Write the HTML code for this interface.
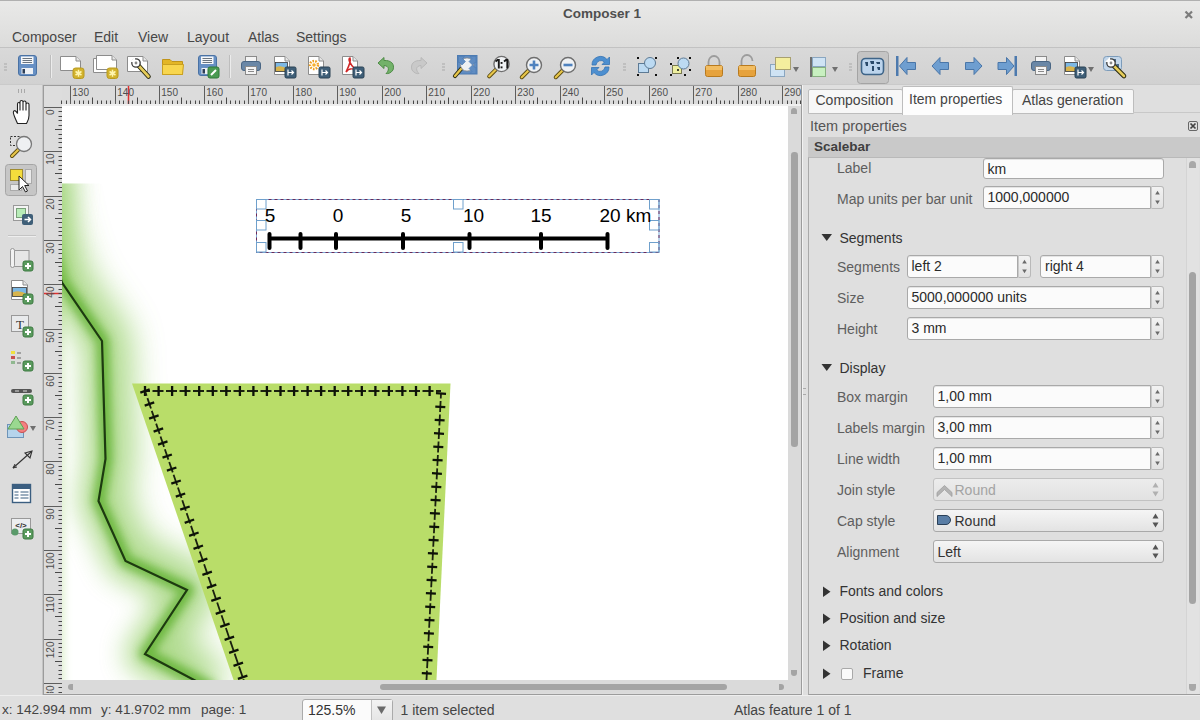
<!DOCTYPE html>
<html><head><meta charset="utf-8">
<style>
*{margin:0;padding:0;box-sizing:border-box}
html,body{width:1200px;height:720px;overflow:hidden;background:#dfdfdf;font-family:"Liberation Sans",sans-serif;color:#3c3c3c}
.a{position:absolute}
.t{position:absolute;white-space:nowrap;font-size:14px;line-height:16px}
.lb{color:#5e5e5e}
.inp{position:absolute;background:#fbfbfb;border:1px solid #a9a9a9;border-radius:3px;height:23px;font-size:14px;line-height:21px;padding-left:4px;color:#2a2a2a;box-shadow:inset 0 1px 0 #e4e4e4}
.spin{position:absolute;width:13px;height:23px;border:1px solid #b9b9b9;border-left:1px solid #c9c9c9;border-radius:0 3px 3px 0;background:linear-gradient(#f2f2f2,#e2e2e2)}
.cmb{position:absolute;background:linear-gradient(#f5f5f5,#e3e3e3);border:1px solid #a9a9a9;border-radius:3px;height:23px;font-size:14px;line-height:22px;padding-left:4px;color:#333}
</style></head><body>

<div class="a" style="left:0;top:0;width:1200px;height:47px;background:linear-gradient(#e9e9e8,#dcdcdb);border-top:1px solid #b0b0b0"></div>
<div class="t" style="left:563px;top:6px;font-weight:bold;font-size:13.5px;color:#4f4f4f">Composer 1</div>
<svg class="a" style="left:1180px;top:6px" width="18" height="18"><path d="M5.5,5.5 L12,12 M12,5.5 L5.5,12" stroke="#7c7c7c" stroke-width="2.2"/></svg>
<div class="t" style="left:12px;top:29px;color:#474747">Composer</div>
<div class="t" style="left:94px;top:29px;color:#474747">Edit</div>
<div class="t" style="left:138px;top:29px;color:#474747">View</div>
<div class="t" style="left:187px;top:29px;color:#474747">Layout</div>
<div class="t" style="left:248px;top:29px;color:#474747">Atlas</div>
<div class="t" style="left:296px;top:29px;color:#474747">Settings</div>
<div class="a" style="left:0;top:47px;width:1200px;height:38px;background:linear-gradient(#d9d9d9,#d1d1d1);border-top:1px solid #c2c2c2;border-bottom:1px solid #cacaca"></div>
<div class="a" style="left:0;top:85px;width:43px;height:610px;background:#dcdcdc;border-right:1px solid #c4c4c4"></div>
<div class="a" style="left:43px;top:85px;width:759px;height:610px;background:#dcdcdc;border:1px solid #9c9c9c"></div>
<div class="a" style="left:44px;top:86px;width:18px;height:20px;background:#dddddd"></div>
<div class="a" style="left:62px;top:104px;width:739px;height:2px;background:#efefef"></div>
<div class="a" style="left:788px;top:106px;width:13px;height:574px;background:#dadada"></div>
<div class="a" style="left:62px;top:680px;width:739px;height:13px;background:#dadada"></div>
<div class="a" style="left:380px;top:684px;width:347px;height:6px;border-radius:3px;background:#a4a4a4"></div>
<div class="a" style="left:67.5px;top:684px;width:5px;height:6px;border-radius:3px 0 0 3px;background:#a4a4a4"></div>
<div class="a" style="left:779px;top:684px;width:5px;height:6px;border-radius:0 3px 3px 0;background:#a4a4a4"></div>
<div class="a" style="left:791px;top:108px;width:6px;height:6px;border-radius:3px 3px 0 0;background:#a4a4a4"></div>
<div class="a" style="left:791px;top:152px;width:6.5px;height:295px;border-radius:3.2px;background:#a4a4a4"></div>
<div class="a" style="left:791px;top:670px;width:6px;height:6px;border-radius:0 0 3px 3px;background:#a4a4a4"></div>
<div class="a" style="left:788px;top:680px;width:13px;height:13px;background:#dadada"></div>
<svg class="a" style="left:0;top:0" width="1200" height="720" font-family="Liberation Sans">
<path d="M4,64H7M4,67H7M4,70H7" stroke="#a9a9a9" stroke-width="1"/>
<g transform="translate(17,55)">
<rect x="1.5" y="0.5" width="18" height="20" rx="2.5" fill="#6790c4" stroke="#4a72a4"/>
<rect x="4" y="1.5" width="12.5" height="7.5" fill="#f6f7f9"/>
<path d="M5.5,3.5H15M5.5,5.5H15M5.5,7.5H15" stroke="#5a6470" stroke-width="0.9"/>
<rect x="4.5" y="13" width="11.5" height="6" fill="#eef1f5"/>
<rect x="5.5" y="14" width="2.5" height="4.5" fill="#2c3e58"/>
</g>
<line x1="50.5" y1="55" x2="50.5" y2="78" stroke="#bdbdbd"/><line x1="51.5" y1="55" x2="51.5" y2="78" stroke="#ececec"/>
<path d="M60.5,56.5H76L80.5,61V70.5H60.5Z" fill="#fff" stroke="#8c8c8c"/>
<path d="M76,56.5V61H80.5" fill="#e6e6e6" stroke="#8c8c8c"/>
<rect x="73" y="68" width="11" height="10.5" rx="2.5" fill="#d2b22c" stroke="#b89a20"/>
<path d="M78.5,69.8V76.7M75.5,71.5L81.5,75M75.5,75L81.5,71.5" stroke="#fff6b0" stroke-width="1.5"/>
<path d="M93.5,58.5H109L113.5,63V72.5H93.5Z" fill="#fff" stroke="#8c8c8c"/>
<path d="M109,58.5V63H113.5" fill="#e6e6e6" stroke="#8c8c8c"/>
<path d="M96.5,55.5H112L116.5,60V69.5H96.5Z" fill="#fff" stroke="#8c8c8c"/>
<path d="M112,55.5V60H116.5" fill="#e6e6e6" stroke="#8c8c8c"/>
<rect x="107" y="68" width="11" height="10.5" rx="2.5" fill="#d2b22c" stroke="#b89a20"/>
<path d="M112.5,69.8V76.7M109.5,71.5L115.5,75M109.5,75L115.5,71.5" stroke="#fff6b0" stroke-width="1.5"/>
<path d="M127.5,56.5H143L147.5,61V71.5H127.5Z" fill="#fff" stroke="#8c8c8c"/>
<path d="M143,56.5V61H147.5" fill="#e6e6e6" stroke="#8c8c8c"/>
<path d="M137.5,64.5 L148.5,76.5" stroke="#2a2a10" stroke-width="4.6" stroke-linecap="round"/><path d="M138,65 L148.5,76.5" stroke="#e6cc5a" stroke-width="2.6" stroke-linecap="round"/><circle cx="136" cy="63" r="4.2" fill="#fff" stroke="#3a3a3a" stroke-width="1.3"/><path d="M134.8,57 L135.6,62.6 L130,61.8Z" fill="#fff" stroke="none"/><circle cx="136" cy="63" r="1.4" fill="#888"/>
<path d="M162.5,59.5H170L172,61.5H182.5V74.5H162.5Z" fill="#e3b626" stroke="#c0941a"/><path d="M162.5,64.5H183.5L182.5,74.5H162.5Z" fill="#f8d64e" stroke="#c9a020"/>
<g transform="translate(197,55)">
<rect x="1.5" y="0.5" width="18" height="20" rx="2.5" fill="#6790c4" stroke="#4a72a4"/>
<rect x="4" y="1.5" width="12.5" height="7.5" fill="#f6f7f9"/>
<path d="M5.5,3.5H15M5.5,5.5H15M5.5,7.5H15" stroke="#5a6470" stroke-width="0.9"/>
<rect x="4.5" y="13" width="11.5" height="6" fill="#eef1f5"/>
<rect x="5.5" y="14" width="2.5" height="4.5" fill="#2c3e58"/>
</g>
<rect x="208" y="67" width="11" height="11" rx="2" fill="#4a9a52" stroke="#2f7a38"/><path d="M211,75L216,70" stroke="#fff" stroke-width="2"/>
<line x1="229.5" y1="55" x2="229.5" y2="78" stroke="#bdbdbd"/><line x1="230.5" y1="55" x2="230.5" y2="78" stroke="#ececec"/>
<g transform="translate(241,56)">
<rect x="4.5" y="0.5" width="11" height="6" fill="#f4f4f4" stroke="#8a8a8a"/>
<rect x="0.5" y="5.5" width="19" height="9" rx="2.5" fill="#6a87a6" stroke="#4a6684"/>
<rect x="4.5" y="10.5" width="11" height="8" fill="#f4f4f4" stroke="#8a8a8a"/>
<path d="M7,13.5H13M7,15.5H13" stroke="#8a8a8a"/>
</g>
<path d="M274.5,56.5H285L289.5,61V74.5H274.5Z" fill="#fff" stroke="#8c8c8c"/>
<path d="M285,56.5V61H289.5" fill="#e6e6e6" stroke="#8c8c8c"/>
<rect x="275.5" y="62.5" width="12" height="9" fill="#7cb8e4"/><path d="M275.5,67.45 Q280.9,64.3 287.5,68.8 V71.5 H275.5Z" fill="#d8b44c"/><rect x="275.5" y="62.5" width="12" height="9" fill="none" stroke="#3a3a3a" stroke-width="0.8"/>
<rect x="285" y="67" width="11" height="11" rx="1.5" fill="#3f5f78" stroke="#2a4254"/>
<path d="M288,69.5V75.5M288,72.5H293.5M291.5,70.5L293.5,72.5L291.5,74.5" stroke="#fff" stroke-width="1.2" fill="none"/>
<path d="M308.5,56.5H319L323.5,61V74.5H308.5Z" fill="#fff" stroke="#8c8c8c"/>
<path d="M319,56.5V61H323.5" fill="#e6e6e6" stroke="#8c8c8c"/>
<circle cx="314" cy="65" r="4" fill="none" stroke="#f0a020" stroke-width="2.4" stroke-dasharray="1.6 1.2"/><circle cx="314" cy="65" r="1.8" fill="#f6b030"/>
<rect x="319" y="67" width="11" height="11" rx="1.5" fill="#3f5f78" stroke="#2a4254"/>
<path d="M322,69.5V75.5M322,72.5H327.5M325.5,70.5L327.5,72.5L325.5,74.5" stroke="#fff" stroke-width="1.2" fill="none"/>
<path d="M342.5,56.5H353L357.5,61V74.5H342.5Z" fill="#fff" stroke="#8c8c8c"/>
<path d="M353,56.5V61H357.5" fill="#e6e6e6" stroke="#8c8c8c"/>
<path d="M346,72 C349,66 351,60 350,58 C348,58 349,64 356,70 C352,68 348,69 346,72Z" fill="none" stroke="#d02828" stroke-width="1.6"/>
<rect x="353" y="67" width="11" height="11" rx="1.5" fill="#3f5f78" stroke="#2a4254"/>
<path d="M356,69.5V75.5M356,72.5H361.5M359.5,70.5L361.5,72.5L359.5,74.5" stroke="#fff" stroke-width="1.2" fill="none"/>
<path d="M378,63 L384,57.5 V60.5 C391,60 395,64 393,70 C391,73 388,74 386,73.5 C389,71 390,66 384,65.5 V68.5Z" fill="#73b26a" stroke="#4f8c47" stroke-width="1"/>
<path d="M427,63 L421,57.5 V60.5 C414,60 410,64 412,70 C414,73 417,74 419,73.5 C416,71 415,66 421,65.5 V68.5Z" fill="#c9c9c9" stroke="#b8b8b8" stroke-width="1"/>
<path d="M442,64H445M442,67H445M442,70H445" stroke="#a9a9a9" stroke-width="1"/>
<rect x="457.5" y="55.5" width="19.5" height="18.5" fill="#5f8cc2" stroke="#4c7bb2"/>
<path d="M461,69 L455,76" stroke="#2a2a10" stroke-width="4.2" stroke-linecap="round"/><path d="M461,69 L455,76" stroke="#e8c64a" stroke-width="2.3" stroke-linecap="round"/>
<circle cx="467" cy="64.5" r="6.6" fill="#eef0f2" stroke="#8a8a8a" stroke-width="0.8"/>
<path d="M458.5,56.5 H464.5 L462.5,58.5 L465.5,61.5 L462,65 L459,62 L458.5,62.5Z M476,56.5 H470 L472,58.5 L469,61.5 L472.5,65 L475.5,62 L476,62.5Z M476,73.5 H470 L472,71.5 L469,68.5 L472.5,65 L475.5,68 L476,67.5Z" fill="#5f8cc2" stroke="#4c7bb2" stroke-width="0.6"/>
<path d="M496.18,69.32L489.18,76.32" stroke="#5a4a10" stroke-width="4" stroke-linecap="round"/>
<path d="M496.18,69.32L489.18,76.32" stroke="#e8c64a" stroke-width="2.2" stroke-linecap="round"/>
<circle cx="501.5" cy="64" r="7.6" fill="#f0f2f4" stroke="#6e6e6e" stroke-width="1.4"/>
<path d="M495.5,61.5 L497.5,60 H498.8 V68.5 M504,61.5 L506,60 H507.3 V68.5" fill="none" stroke="#1a1a1a" stroke-width="1.9"/><rect x="500.6" y="62" width="1.9" height="1.9" fill="#1a1a1a"/><rect x="500.6" y="66.4" width="1.9" height="1.9" fill="#1a1a1a"/>
<path d="M528.75,70.25L521.75,77.25" stroke="#5a4a10" stroke-width="4" stroke-linecap="round"/>
<path d="M528.75,70.25L521.75,77.25" stroke="#e8c64a" stroke-width="2.2" stroke-linecap="round"/>
<circle cx="534" cy="65" r="7.5" fill="#f0f2f4" stroke="#6e6e6e" stroke-width="1.4"/>
<path d="M534,60.5V69.5M529.5,65H538.5" stroke="#4f82bf" stroke-width="2.6"/>
<path d="M562.75,70.25L555.75,77.25" stroke="#5a4a10" stroke-width="4" stroke-linecap="round"/>
<path d="M562.75,70.25L555.75,77.25" stroke="#e8c64a" stroke-width="2.2" stroke-linecap="round"/>
<circle cx="568" cy="65" r="7.5" fill="#f0f2f4" stroke="#6e6e6e" stroke-width="1.4"/>
<path d="M563.5,65H572.5" stroke="#4f82bf" stroke-width="2.6"/>
<path d="M592,65 A8.5,8.5 0 0 1 607,59.5 L609.5,57 V64.5 H602 L604.5,62 A5,5 0 0 0 596,65Z" fill="#4d8fd0" stroke="#3674b2" stroke-width="0.8"/><path d="M609,67 A8.5,8.5 0 0 1 594,72.5 L591.5,75 V67.5 H599 L596.5,70 A5,5 0 0 0 605,67Z" fill="#4d8fd0" stroke="#3674b2" stroke-width="0.8"/>
<path d="M623,64H626M623,67H626M623,70H626" stroke="#a9a9a9" stroke-width="1"/>
<rect x="638.5" y="63.5" width="10" height="9" fill="#bcdaf2" stroke="#5d7a94"/><circle cx="650" cy="63" r="5.5" fill="#bcdaf2" stroke="#5d7a94"/>
<path d="M637,57h2v2h-2zM655,57h2v2h-2zM637,74h2v2h-2zM655,74h2v2h-2z" fill="#111"/>
<rect x="672.5" y="65.5" width="9" height="8" fill="#eef0a0" stroke="#7a7a50"/><circle cx="683.5" cy="63.5" r="5.5" fill="#bcdaf2" stroke="#5d7a94"/><circle cx="678" cy="70" r="1" fill="#111"/>
<path d="M670,63h2v2h-2zM689,57h2v2h-2zM670,74h2v2h-2zM689,69h2v2h-2zM684,74h2v2h-2zM677,57h2v2h-2z" fill="#111"/>
<path d="M708.5,66V62 A5.5,6 0 0 1 719.5,62 V66" fill="none" stroke="#9c9c9c" stroke-width="1.8"/><rect x="705.5" y="65.5" width="17" height="11" rx="2" fill="#e6a23c" stroke="#b87a1e"/><rect x="706" y="66" width="16" height="4" fill="#f2bd62"/>
<path d="M741.5,66V61 A5.5,6 0 0 1 752.5,61" fill="none" stroke="#9c9c9c" stroke-width="1.8"/><rect x="738.5" y="65.5" width="17" height="11" rx="2" fill="#e6a23c" stroke="#b87a1e"/><rect x="739" y="66" width="16" height="4" fill="#f2bd62"/>
<rect x="770.5" y="64.5" width="14" height="12" fill="#cfe3f4" stroke="#8aa6c0"/><rect x="775.5" y="57.5" width="15" height="12" fill="#f4ee9e" stroke="#a8a070"/>
<path d="M793,67H799L796,72Z" fill="#707070"/>
<rect x="810" y="57" width="2" height="20" fill="#6e6e6e"/><rect x="812.5" y="57.5" width="13" height="9" fill="#cfe3f4" stroke="#8aa6c0"/><rect x="812.5" y="67.5" width="13" height="9" fill="#c8f0c0" stroke="#88b080"/>
<path d="M832,67H838L835,72Z" fill="#707070"/>
<path d="M849,64H852M849,67H852M849,70H852" stroke="#a9a9a9" stroke-width="1"/>
<rect x="857.5" y="51.5" width="31" height="32" rx="3" fill="#c4c4c4" stroke="#a4a4a4"/>
<rect x="861.5" y="58.5" width="22" height="16" rx="4" fill="#bcd4ec" stroke="#3e6488" stroke-width="1.6"/><path d="M865,62h3v4h-2zM870,61h4v3h-3zM872,66h2v5h-2zM876,62h4v2h-3zM877,67h3v3h-2z" fill="#2a4a6a"/>
<rect x="896" y="56" width="2.5" height="20" fill="#4d7aae"/><path d="M899.5,66 L907,57.5 V62.5 H915.5 V69.5 H907 V74.5Z" fill="#6e9ed0" stroke="#4a76a8"/>
<path d="M932,66 L940,57.5 V62.5 H948.5 V69.5 H940 V74.5Z" fill="#6e9ed0" stroke="#4a76a8"/>
<path d="M982,66 L974,57.5 V62.5 H965.5 V69.5 H974 V74.5Z" fill="#6e9ed0" stroke="#4a76a8"/>
<rect x="1014.5" y="56" width="2.5" height="20" fill="#4d7aae"/><path d="M1014,66 L1006.5,57.5 V62.5 H998 V69.5 H1006.5 V74.5Z" fill="#6e9ed0" stroke="#4a76a8"/>
<g transform="translate(1031,56)">
<rect x="4.5" y="0.5" width="11" height="6" fill="#f4f4f4" stroke="#8a8a8a"/>
<rect x="0.5" y="5.5" width="19" height="9" rx="2.5" fill="#6a87a6" stroke="#4a6684"/>
<rect x="4.5" y="10.5" width="11" height="8" fill="#f4f4f4" stroke="#8a8a8a"/>
<path d="M7,13.5H13M7,15.5H13" stroke="#8a8a8a"/>
</g>
<path d="M1064.5,56.5H1075L1079.5,61V74.5H1064.5Z" fill="#fff" stroke="#8c8c8c"/>
<path d="M1075,56.5V61H1079.5" fill="#e6e6e6" stroke="#8c8c8c"/>
<rect x="1065.5" y="62.5" width="12" height="9" fill="#7cb8e4"/><path d="M1065.5,67.45 Q1070.9,64.3 1077.5,68.8 V71.5 H1065.5Z" fill="#d8b44c"/><rect x="1065.5" y="62.5" width="12" height="9" fill="none" stroke="#3a3a3a" stroke-width="0.8"/>
<rect x="1075" y="67" width="11" height="11" rx="1.5" fill="#3f5f78" stroke="#2a4254"/>
<path d="M1078,69.5V75.5M1078,72.5H1083.5M1081.5,70.5L1083.5,72.5L1081.5,74.5" stroke="#fff" stroke-width="1.2" fill="none"/>
<path d="M1088,67H1094L1091,72Z" fill="#707070"/>
<rect x="1103.5" y="56.5" width="18" height="14" rx="3" fill="#c2d6ea" stroke="#7d9cba"/><path d="M1107,60h3v3h-2zM1113,59h3v3h-3zM1116,64h3v3h-2z" fill="#4a6a8a"/>
<path d="M1112.5,64.5 L1124,76" stroke="#2a2a10" stroke-width="4.6" stroke-linecap="round"/><path d="M1113,65 L1124,76" stroke="#e6cc5a" stroke-width="2.6" stroke-linecap="round"/><circle cx="1111" cy="63" r="4.2" fill="#fff" stroke="#3a3a3a" stroke-width="1.3"/><path d="M1109.8,57 L1110.6,62.6 L1105,61.8Z" fill="#fff" stroke="none"/><circle cx="1111" cy="63" r="1.4" fill="#888"/>
<path d="M18.5,89V93M21.5,89V93M24.5,89V93" stroke="#a9a9a9"/>
<g transform="translate(0.5,1.5)"><path d="M17,122 C15,117 12,112 13,110 C14,108 16,110 17,112 V102.5 C17,100.5 19.5,100.5 19.5,102.5 V109 V100.5 C19.5,98.5 22.5,98.5 22.5,100.5 V109 V101 C22.5,99 25.5,99 25.5,101 V109 V103 C25.5,101 28.5,101 28.5,103 V114 C28.5,118 27,120 26,122Z" fill="#fff" stroke="#222" stroke-width="1.1"/></g>
<rect x="10.5" y="136.5" width="10" height="9" fill="none" stroke="#333" stroke-dasharray="2 1.5"/>
<path d="M18,150 L12,156" stroke="#5a4a10" stroke-width="4" stroke-linecap="round"/><path d="M18,150 L12,156" stroke="#e8c64a" stroke-width="2.2" stroke-linecap="round"/><circle cx="24" cy="144" r="7.5" fill="#eef0f2" stroke="#777" stroke-width="1.3"/>
<rect x="5.5" y="164.5" width="31" height="31" rx="3" fill="#c6c6c6" stroke="#a6a6a6"/>
<rect x="10.5" y="169.5" width="12" height="11" fill="#f4dc3c" stroke="#a08c30"/><rect x="25.5" y="169.5" width="6" height="14" fill="#eaeaea" stroke="#aaa"/><rect x="10.5" y="184.5" width="11" height="6" fill="#eaeaea" stroke="#aaa"/>
<path d="M19,176 L19,190 L22.5,186.5 L25.5,192 L27.5,191 L24.7,185.5 L29,185.5Z" fill="#fff" stroke="#222" stroke-width="1"/>
<rect x="13.5" y="205.5" width="15" height="15" fill="#f4f4f4" stroke="#999"/><rect x="16.5" y="208.5" width="9" height="9" fill="#b8ecb8" stroke="#7aa07a"/>
<rect x="22" y="214" width="11" height="11" rx="2" fill="#3f5f78"/><path d="M24.5,219.5H30M28,217L30.5,219.5L28,222" stroke="#fff" stroke-width="1.5" fill="none"/>
<line x1="8" y1="235.5" x2="36" y2="235.5" stroke="#c4c4c4"/><line x1="8" y1="236.5" x2="36" y2="236.5" stroke="#eeeeee"/>
<rect x="13.5" y="250.5" width="15.5" height="16" fill="#e6e6e6" stroke="#999"/><rect x="10.5" y="248.5" width="4" height="19" rx="2" fill="#f2f2f2" stroke="#999"/>
<rect x="23" y="261" width="10" height="10" rx="2" fill="#5a9a5e" stroke="#3c7a40"/>
<path d="M28,263V269M25,266H31" stroke="#fff" stroke-width="2"/>
<path d="M11.5,280.5H23L27.5,285V299.5H11.5Z" fill="#fff" stroke="#8c8c8c"/>
<path d="M23,280.5V285H27.5" fill="#e6e6e6" stroke="#8c8c8c"/>
<rect x="12.5" y="287.5" width="14" height="9" fill="#7cb8e4"/><path d="M12.5,292.45 Q18.8,289.3 26.5,293.8 V296.5 H12.5Z" fill="#d8b44c"/><rect x="12.5" y="287.5" width="14" height="9" fill="none" stroke="#3a3a3a" stroke-width="0.8"/>
<rect x="23" y="294" width="10" height="10" rx="2" fill="#5a9a5e" stroke="#3c7a40"/>
<path d="M28,296V302M25,299H31" stroke="#fff" stroke-width="2"/>
<rect x="11.5" y="315.5" width="17" height="16" fill="#e8eaec" stroke="#999"/><text x="20" y="329" font-family="Liberation Serif" font-size="13" text-anchor="middle" fill="#333">T</text>
<rect x="23" y="327" width="10" height="10" rx="2" fill="#5a9a5e" stroke="#3c7a40"/>
<path d="M28,329V335M25,332H31" stroke="#fff" stroke-width="2"/>
<rect x="11" y="351" width="4" height="3" fill="#f0e040"/><rect x="11" y="356" width="4" height="3" fill="#c85050"/><rect x="11" y="361" width="4" height="3" fill="#90b890"/><path d="M17,353H21M17,358H21M17,363H21" stroke="#666"/>
<rect x="23" y="361" width="10" height="10" rx="2" fill="#5a9a5e" stroke="#3c7a40"/>
<path d="M28,363V369M25,366H31" stroke="#fff" stroke-width="2"/>
<rect x="11" y="389" width="21" height="4" rx="2" fill="#555"/><path d="M15,391H19M23,391H27" stroke="#ddd" stroke-width="1"/>
<rect x="23" y="395" width="10" height="10" rx="2" fill="#5a9a5e" stroke="#3c7a40"/>
<path d="M28,397V403M25,400H31" stroke="#fff" stroke-width="2"/>
<rect x="7.5" y="424.5" width="16" height="13" fill="#b6d4ec" stroke="#6e94b8"/><circle cx="22" cy="427" r="5.5" fill="#f48080" stroke="#c85050"/><path d="M16,416 L24,429 H8Z" fill="#9ad890" stroke="#5ea054"/>
<path d="M30,426H36L33,431Z" fill="#707070"/>
<path d="M13,468 L31,452" stroke="#333" stroke-width="1.2"/><path d="M32,451 L25,453 L30,458Z" fill="none" stroke="#333" stroke-width="1.1"/><path d="M13,468 L15,464 M13,468 L17,467" stroke="#333"/>
<rect x="12.5" y="484.5" width="18" height="18" fill="#fff" stroke="#3b5e80" stroke-width="1.4"/><rect x="13" y="485" width="17" height="4" fill="#3b5e80"/><path d="M14.5,492H18.5M20.5,492H28.5M14.5,495H18.5M20.5,495H28.5M14.5,498H18.5M20.5,498H28.5" stroke="#3b5e80"/>
<rect x="11.5" y="518.5" width="19" height="15" fill="#eceef0" stroke="#999"/><text x="21" y="528" font-size="8" text-anchor="middle" fill="#333" font-weight="bold">&lt;/&gt;</text><circle cx="15" cy="532" r="3.5" fill="#5a9a6a"/>
<rect x="23" y="529" width="10" height="10" rx="2" fill="#5a9a5e" stroke="#3c7a40"/>
<path d="M28,531V537M25,534H31" stroke="#fff" stroke-width="2"/>
<defs><clipPath id="cv"><rect x="62" y="106" width="726" height="574"/></clipPath><clipPath id="mp"><rect x="0" y="183.5" width="788" height="500"/></clipPath><filter id="bl" x="-50%" y="-50%" width="200%" height="200%"><feGaussianBlur stdDeviation="9"/></filter><filter id="bl2" x="-50%" y="-50%" width="200%" height="200%"><feGaussianBlur stdDeviation="4"/></filter><filter id="bl3" x="-50%" y="-50%" width="200%" height="200%"><feGaussianBlur stdDeviation="13"/></filter><filter id="bl4" x="-50%" y="-50%" width="200%" height="200%"><feGaussianBlur stdDeviation="16"/></filter></defs>
<rect x="62" y="106" width="726" height="574" fill="#fff"/>
<g clip-path="url(#cv)"><g clip-path="url(#mp)">
<clipPath id="ce"><path d="M30,150 L45,230 L62,282.5 L102,341 L105.5,459 L98.5,501 L125.5,561 L187,590 L145,654 L213,690 L900,690 L900,100 L30,100Z"/></clipPath><clipPath id="cw"><path d="M30,150 L45,230 L62,282.5 L102,341 L105.5,459 L98.5,501 L125.5,561 L187,590 L145,654 L213,690 L-200,690 L-200,100 L30,100Z"/></clipPath>
<g clip-path="url(#ce)"><path d="M30,150 L45,230 L62,282.5 L102,341 L105.5,459 L98.5,501 L125.5,561 L187,590 L145,654 L213,690" fill="none" stroke="#8ccb5c" stroke-width="58" stroke-linejoin="round" filter="url(#bl4)" opacity="0.7"/><path d="M30,150 L45,230 L62,282.5 L102,341 L105.5,459 L98.5,501 L125.5,561 L187,590 L145,654 L213,690" fill="none" stroke="#6ab63c" stroke-width="14" stroke-linejoin="round" filter="url(#bl2)" opacity="0.95"/></g>
<g clip-path="url(#cw)"><path d="M30,150 L45,230 L62,282.5 L102,341 L105.5,459 L98.5,501 L125.5,561 L187,590 L145,654 L213,690" fill="none" stroke="#8ccb5c" stroke-width="40" stroke-linejoin="round" filter="url(#bl3)" opacity="0.65"/><path d="M30,150 L45,230 L62,282.5 L102,341 L105.5,459 L98.5,501 L125.5,561 L187,590 L145,654 L213,690" fill="none" stroke="#6ab63c" stroke-width="12" stroke-linejoin="round" filter="url(#bl2)" opacity="0.85"/></g>
<path d="M20,170 L75,170 L62,290 L30,290Z" fill="#8ccb5c" filter="url(#bl3)" opacity="0.55"/>
<rect x="30" y="300" width="34" height="400" fill="#8ccc55" filter="url(#bl2)" opacity="0.3"/>
<path d="M30,150 L45,230 L62,282.5 L102,341 L105.5,459 L98.5,501 L125.5,561 L187,590 L145,654 L213,690" fill="none" stroke="#1d3a10" stroke-width="2.2" stroke-linejoin="miter"/>
<path d="M132,383.5 L450.5,383.5 L436,690 L237,690Z" fill="#b9dd69"/>
<path d="M145.0,391.0L441.0,391.0" stroke="#1a200f" stroke-width="1.8" stroke-dasharray="11 2.5" stroke-dashoffset="6"/>
<path d="M145.0,386.0L145.0,396.0" stroke="#0d1208" stroke-width="2.3"/>
<path d="M158.6,386.0L158.6,396.0" stroke="#0d1208" stroke-width="2.3"/>
<path d="M172.1,386.0L172.1,396.0" stroke="#0d1208" stroke-width="2.3"/>
<path d="M185.7,386.0L185.7,396.0" stroke="#0d1208" stroke-width="2.3"/>
<path d="M199.2,386.0L199.2,396.0" stroke="#0d1208" stroke-width="2.3"/>
<path d="M212.8,386.0L212.8,396.0" stroke="#0d1208" stroke-width="2.3"/>
<path d="M226.3,386.0L226.3,396.0" stroke="#0d1208" stroke-width="2.3"/>
<path d="M239.9,386.0L239.9,396.0" stroke="#0d1208" stroke-width="2.3"/>
<path d="M253.4,386.0L253.4,396.0" stroke="#0d1208" stroke-width="2.3"/>
<path d="M266.9,386.0L266.9,396.0" stroke="#0d1208" stroke-width="2.3"/>
<path d="M280.5,386.0L280.5,396.0" stroke="#0d1208" stroke-width="2.3"/>
<path d="M294.1,386.0L294.1,396.0" stroke="#0d1208" stroke-width="2.3"/>
<path d="M307.6,386.0L307.6,396.0" stroke="#0d1208" stroke-width="2.3"/>
<path d="M321.1,386.0L321.1,396.0" stroke="#0d1208" stroke-width="2.3"/>
<path d="M334.7,386.0L334.7,396.0" stroke="#0d1208" stroke-width="2.3"/>
<path d="M348.2,386.0L348.2,396.0" stroke="#0d1208" stroke-width="2.3"/>
<path d="M361.8,386.0L361.8,396.0" stroke="#0d1208" stroke-width="2.3"/>
<path d="M375.4,386.0L375.4,396.0" stroke="#0d1208" stroke-width="2.3"/>
<path d="M388.9,386.0L388.9,396.0" stroke="#0d1208" stroke-width="2.3"/>
<path d="M402.4,386.0L402.4,396.0" stroke="#0d1208" stroke-width="2.3"/>
<path d="M416.0,386.0L416.0,396.0" stroke="#0d1208" stroke-width="2.3"/>
<path d="M429.6,386.0L429.6,396.0" stroke="#0d1208" stroke-width="2.3"/>
<path d="M441.0,393.5L426.0,690.0" stroke="#1a200f" stroke-width="1.8" stroke-dasharray="11 2.5" stroke-dashoffset="6"/>
<path d="M446.0,393.8L436.0,393.2" stroke="#0d1208" stroke-width="2.3"/>
<path d="M445.3,407.1L435.3,406.6" stroke="#0d1208" stroke-width="2.3"/>
<path d="M444.6,420.4L434.7,419.9" stroke="#0d1208" stroke-width="2.3"/>
<path d="M444.0,433.8L434.0,433.2" stroke="#0d1208" stroke-width="2.3"/>
<path d="M443.3,447.1L433.3,446.6" stroke="#0d1208" stroke-width="2.3"/>
<path d="M442.6,460.4L432.6,459.9" stroke="#0d1208" stroke-width="2.3"/>
<path d="M441.9,473.8L432.0,473.2" stroke="#0d1208" stroke-width="2.3"/>
<path d="M441.3,487.1L431.3,486.6" stroke="#0d1208" stroke-width="2.3"/>
<path d="M440.6,500.4L430.6,499.9" stroke="#0d1208" stroke-width="2.3"/>
<path d="M439.9,513.7L429.9,513.2" stroke="#0d1208" stroke-width="2.3"/>
<path d="M439.2,527.1L429.3,526.6" stroke="#0d1208" stroke-width="2.3"/>
<path d="M438.6,540.4L428.6,539.9" stroke="#0d1208" stroke-width="2.3"/>
<path d="M437.9,553.7L427.9,553.2" stroke="#0d1208" stroke-width="2.3"/>
<path d="M437.2,567.1L427.2,566.6" stroke="#0d1208" stroke-width="2.3"/>
<path d="M436.6,580.4L426.6,579.9" stroke="#0d1208" stroke-width="2.3"/>
<path d="M435.9,593.7L425.9,593.2" stroke="#0d1208" stroke-width="2.3"/>
<path d="M435.2,607.1L425.2,606.6" stroke="#0d1208" stroke-width="2.3"/>
<path d="M434.5,620.4L424.5,619.9" stroke="#0d1208" stroke-width="2.3"/>
<path d="M433.9,633.7L423.9,633.2" stroke="#0d1208" stroke-width="2.3"/>
<path d="M433.2,647.1L423.2,646.6" stroke="#0d1208" stroke-width="2.3"/>
<path d="M432.5,660.4L422.5,659.9" stroke="#0d1208" stroke-width="2.3"/>
<path d="M431.8,673.7L421.8,673.2" stroke="#0d1208" stroke-width="2.3"/>
<path d="M431.2,687.1L421.2,686.6" stroke="#0d1208" stroke-width="2.3"/>
<path d="M145.0,391.0L247.0,690.0" stroke="#1a200f" stroke-width="1.8" stroke-dasharray="11 2.5" stroke-dashoffset="6"/>
<path d="M149.7,389.4L140.3,392.6" stroke="#0d1208" stroke-width="2.3"/>
<path d="M154.2,402.4L144.7,405.6" stroke="#0d1208" stroke-width="2.3"/>
<path d="M158.6,415.4L149.1,418.6" stroke="#0d1208" stroke-width="2.3"/>
<path d="M163.1,428.4L153.6,431.7" stroke="#0d1208" stroke-width="2.3"/>
<path d="M167.5,441.4L158.0,444.7" stroke="#0d1208" stroke-width="2.3"/>
<path d="M171.9,454.5L162.5,457.7" stroke="#0d1208" stroke-width="2.3"/>
<path d="M176.4,467.5L166.9,470.7" stroke="#0d1208" stroke-width="2.3"/>
<path d="M180.8,480.5L171.3,483.7" stroke="#0d1208" stroke-width="2.3"/>
<path d="M185.2,493.5L175.8,496.7" stroke="#0d1208" stroke-width="2.3"/>
<path d="M189.7,506.5L180.2,509.7" stroke="#0d1208" stroke-width="2.3"/>
<path d="M194.1,519.5L184.7,522.8" stroke="#0d1208" stroke-width="2.3"/>
<path d="M198.6,532.5L189.1,535.8" stroke="#0d1208" stroke-width="2.3"/>
<path d="M203.0,545.5L193.5,548.8" stroke="#0d1208" stroke-width="2.3"/>
<path d="M207.4,558.6L198.0,561.8" stroke="#0d1208" stroke-width="2.3"/>
<path d="M211.9,571.6L202.4,574.8" stroke="#0d1208" stroke-width="2.3"/>
<path d="M216.3,584.6L206.9,587.8" stroke="#0d1208" stroke-width="2.3"/>
<path d="M220.8,597.6L211.3,600.8" stroke="#0d1208" stroke-width="2.3"/>
<path d="M225.2,610.6L215.7,613.8" stroke="#0d1208" stroke-width="2.3"/>
<path d="M229.6,623.6L220.2,626.9" stroke="#0d1208" stroke-width="2.3"/>
<path d="M234.1,636.6L224.6,639.9" stroke="#0d1208" stroke-width="2.3"/>
<path d="M238.5,649.7L229.1,652.9" stroke="#0d1208" stroke-width="2.3"/>
<path d="M243.0,662.7L233.5,665.9" stroke="#0d1208" stroke-width="2.3"/>
<path d="M247.4,675.7L237.9,678.9" stroke="#0d1208" stroke-width="2.3"/>
</g></g>
<rect x="256.5" y="199.5" width="402.5" height="53" fill="none" stroke="#7aaad8" stroke-width="1"/>
<rect x="256.5" y="199.5" width="402.5" height="53" fill="none" stroke="#6a2a5a" stroke-width="1" stroke-dasharray="3 3"/>
<rect x="256.5" y="199.5" width="9.5" height="9.5" fill="none" stroke="#6fa0cc" stroke-width="1"/>
<rect x="453.5" y="199.5" width="9.5" height="9.5" fill="none" stroke="#6fa0cc" stroke-width="1"/>
<rect x="649.5" y="199.5" width="9.5" height="9.5" fill="none" stroke="#6fa0cc" stroke-width="1"/>
<rect x="256.5" y="220.5" width="9.5" height="9.5" fill="none" stroke="#6fa0cc" stroke-width="1"/>
<rect x="649.5" y="220.5" width="9.5" height="9.5" fill="none" stroke="#6fa0cc" stroke-width="1"/>
<rect x="256.5" y="242.5" width="9.5" height="9.5" fill="none" stroke="#6fa0cc" stroke-width="1"/>
<rect x="453.5" y="242.5" width="9.5" height="9.5" fill="none" stroke="#6fa0cc" stroke-width="1"/>
<rect x="649.5" y="242.5" width="9.5" height="9.5" fill="none" stroke="#6fa0cc" stroke-width="1"/>
<path d="M269.5,238.5 H607.5" stroke="#000" stroke-width="4"/>
<path d="M269.5,234 V248" stroke="#000" stroke-width="4" stroke-linecap="round"/>
<path d="M300.5,234 V248" stroke="#000" stroke-width="4" stroke-linecap="round"/>
<path d="M336,234 V248" stroke="#000" stroke-width="4" stroke-linecap="round"/>
<path d="M403,234 V248" stroke="#000" stroke-width="4" stroke-linecap="round"/>
<path d="M469.5,234 V248" stroke="#000" stroke-width="4" stroke-linecap="round"/>
<path d="M541,234 V248" stroke="#000" stroke-width="4" stroke-linecap="round"/>
<path d="M607.5,234 V248" stroke="#000" stroke-width="4" stroke-linecap="round"/>
<text x="270" y="221.5" font-size="19" text-anchor="middle" fill="#000">5</text>
<text x="338" y="221.5" font-size="19" text-anchor="middle" fill="#000">0</text>
<text x="406" y="221.5" font-size="19" text-anchor="middle" fill="#000">5</text>
<text x="473.5" y="221.5" font-size="19" text-anchor="middle" fill="#000">10</text>
<text x="541" y="221.5" font-size="19" text-anchor="middle" fill="#000">15</text>
<text x="599.5" y="221.5" font-size="19" fill="#000">20 km</text>
<line x1="128.5" y1="86" x2="128.5" y2="104" stroke="#e03030" stroke-width="1.5"/>
<line x1="44" y1="293.5" x2="62" y2="293.5" stroke="#e03030" stroke-width="1.5"/>
<line x1="61.5" y1="100.5" x2="61.5" y2="104" stroke="#484848" stroke-width="1"/>
<line x1="66.5" y1="100.5" x2="66.5" y2="104" stroke="#484848" stroke-width="1"/>
<line x1="70.5" y1="86" x2="70.5" y2="104" stroke="#5e5e5e" stroke-width="1"/>
<text x="72.3" y="96.3" font-size="10" fill="#4e4e4e">130</text>
<line x1="74.5" y1="100.5" x2="74.5" y2="104" stroke="#484848" stroke-width="1"/>
<line x1="79.5" y1="100.5" x2="79.5" y2="104" stroke="#484848" stroke-width="1"/>
<line x1="83.5" y1="100.5" x2="83.5" y2="104" stroke="#484848" stroke-width="1"/>
<line x1="88.5" y1="100.5" x2="88.5" y2="104" stroke="#484848" stroke-width="1"/>
<line x1="92.5" y1="97.5" x2="92.5" y2="104" stroke="#484848" stroke-width="1"/>
<line x1="97.5" y1="100.5" x2="97.5" y2="104" stroke="#484848" stroke-width="1"/>
<line x1="101.5" y1="100.5" x2="101.5" y2="104" stroke="#484848" stroke-width="1"/>
<line x1="106.5" y1="100.5" x2="106.5" y2="104" stroke="#484848" stroke-width="1"/>
<line x1="110.5" y1="100.5" x2="110.5" y2="104" stroke="#484848" stroke-width="1"/>
<line x1="115.5" y1="86" x2="115.5" y2="104" stroke="#5e5e5e" stroke-width="1"/>
<text x="117.3" y="96.3" font-size="10" fill="#4e4e4e">140</text>
<line x1="119.5" y1="100.5" x2="119.5" y2="104" stroke="#484848" stroke-width="1"/>
<line x1="123.5" y1="100.5" x2="123.5" y2="104" stroke="#484848" stroke-width="1"/>
<line x1="128.5" y1="100.5" x2="128.5" y2="104" stroke="#484848" stroke-width="1"/>
<line x1="132.5" y1="100.5" x2="132.5" y2="104" stroke="#484848" stroke-width="1"/>
<line x1="137.5" y1="97.5" x2="137.5" y2="104" stroke="#484848" stroke-width="1"/>
<line x1="141.5" y1="100.5" x2="141.5" y2="104" stroke="#484848" stroke-width="1"/>
<line x1="146.5" y1="100.5" x2="146.5" y2="104" stroke="#484848" stroke-width="1"/>
<line x1="150.5" y1="100.5" x2="150.5" y2="104" stroke="#484848" stroke-width="1"/>
<line x1="155.5" y1="100.5" x2="155.5" y2="104" stroke="#484848" stroke-width="1"/>
<line x1="159.5" y1="86" x2="159.5" y2="104" stroke="#5e5e5e" stroke-width="1"/>
<text x="161.3" y="96.3" font-size="10" fill="#4e4e4e">150</text>
<line x1="163.5" y1="100.5" x2="163.5" y2="104" stroke="#484848" stroke-width="1"/>
<line x1="168.5" y1="100.5" x2="168.5" y2="104" stroke="#484848" stroke-width="1"/>
<line x1="172.5" y1="100.5" x2="172.5" y2="104" stroke="#484848" stroke-width="1"/>
<line x1="177.5" y1="100.5" x2="177.5" y2="104" stroke="#484848" stroke-width="1"/>
<line x1="181.5" y1="97.5" x2="181.5" y2="104" stroke="#484848" stroke-width="1"/>
<line x1="186.5" y1="100.5" x2="186.5" y2="104" stroke="#484848" stroke-width="1"/>
<line x1="190.5" y1="100.5" x2="190.5" y2="104" stroke="#484848" stroke-width="1"/>
<line x1="195.5" y1="100.5" x2="195.5" y2="104" stroke="#484848" stroke-width="1"/>
<line x1="199.5" y1="100.5" x2="199.5" y2="104" stroke="#484848" stroke-width="1"/>
<line x1="204.5" y1="86" x2="204.5" y2="104" stroke="#5e5e5e" stroke-width="1"/>
<text x="206.3" y="96.3" font-size="10" fill="#4e4e4e">160</text>
<line x1="208.5" y1="100.5" x2="208.5" y2="104" stroke="#484848" stroke-width="1"/>
<line x1="212.5" y1="100.5" x2="212.5" y2="104" stroke="#484848" stroke-width="1"/>
<line x1="217.5" y1="100.5" x2="217.5" y2="104" stroke="#484848" stroke-width="1"/>
<line x1="221.5" y1="100.5" x2="221.5" y2="104" stroke="#484848" stroke-width="1"/>
<line x1="226.5" y1="97.5" x2="226.5" y2="104" stroke="#484848" stroke-width="1"/>
<line x1="230.5" y1="100.5" x2="230.5" y2="104" stroke="#484848" stroke-width="1"/>
<line x1="235.5" y1="100.5" x2="235.5" y2="104" stroke="#484848" stroke-width="1"/>
<line x1="239.5" y1="100.5" x2="239.5" y2="104" stroke="#484848" stroke-width="1"/>
<line x1="244.5" y1="100.5" x2="244.5" y2="104" stroke="#484848" stroke-width="1"/>
<line x1="248.5" y1="86" x2="248.5" y2="104" stroke="#5e5e5e" stroke-width="1"/>
<text x="250.3" y="96.3" font-size="10" fill="#4e4e4e">170</text>
<line x1="253.5" y1="100.5" x2="253.5" y2="104" stroke="#484848" stroke-width="1"/>
<line x1="257.5" y1="100.5" x2="257.5" y2="104" stroke="#484848" stroke-width="1"/>
<line x1="261.5" y1="100.5" x2="261.5" y2="104" stroke="#484848" stroke-width="1"/>
<line x1="266.5" y1="100.5" x2="266.5" y2="104" stroke="#484848" stroke-width="1"/>
<line x1="270.5" y1="97.5" x2="270.5" y2="104" stroke="#484848" stroke-width="1"/>
<line x1="275.5" y1="100.5" x2="275.5" y2="104" stroke="#484848" stroke-width="1"/>
<line x1="279.5" y1="100.5" x2="279.5" y2="104" stroke="#484848" stroke-width="1"/>
<line x1="284.5" y1="100.5" x2="284.5" y2="104" stroke="#484848" stroke-width="1"/>
<line x1="288.5" y1="100.5" x2="288.5" y2="104" stroke="#484848" stroke-width="1"/>
<line x1="293.5" y1="86" x2="293.5" y2="104" stroke="#5e5e5e" stroke-width="1"/>
<text x="295.3" y="96.3" font-size="10" fill="#4e4e4e">180</text>
<line x1="297.5" y1="100.5" x2="297.5" y2="104" stroke="#484848" stroke-width="1"/>
<line x1="302.5" y1="100.5" x2="302.5" y2="104" stroke="#484848" stroke-width="1"/>
<line x1="306.5" y1="100.5" x2="306.5" y2="104" stroke="#484848" stroke-width="1"/>
<line x1="310.5" y1="100.5" x2="310.5" y2="104" stroke="#484848" stroke-width="1"/>
<line x1="315.5" y1="97.5" x2="315.5" y2="104" stroke="#484848" stroke-width="1"/>
<line x1="319.5" y1="100.5" x2="319.5" y2="104" stroke="#484848" stroke-width="1"/>
<line x1="324.5" y1="100.5" x2="324.5" y2="104" stroke="#484848" stroke-width="1"/>
<line x1="328.5" y1="100.5" x2="328.5" y2="104" stroke="#484848" stroke-width="1"/>
<line x1="333.5" y1="100.5" x2="333.5" y2="104" stroke="#484848" stroke-width="1"/>
<line x1="337.5" y1="86" x2="337.5" y2="104" stroke="#5e5e5e" stroke-width="1"/>
<text x="339.3" y="96.3" font-size="10" fill="#4e4e4e">190</text>
<line x1="342.5" y1="100.5" x2="342.5" y2="104" stroke="#484848" stroke-width="1"/>
<line x1="346.5" y1="100.5" x2="346.5" y2="104" stroke="#484848" stroke-width="1"/>
<line x1="350.5" y1="100.5" x2="350.5" y2="104" stroke="#484848" stroke-width="1"/>
<line x1="355.5" y1="100.5" x2="355.5" y2="104" stroke="#484848" stroke-width="1"/>
<line x1="359.5" y1="97.5" x2="359.5" y2="104" stroke="#484848" stroke-width="1"/>
<line x1="364.5" y1="100.5" x2="364.5" y2="104" stroke="#484848" stroke-width="1"/>
<line x1="368.5" y1="100.5" x2="368.5" y2="104" stroke="#484848" stroke-width="1"/>
<line x1="373.5" y1="100.5" x2="373.5" y2="104" stroke="#484848" stroke-width="1"/>
<line x1="377.5" y1="100.5" x2="377.5" y2="104" stroke="#484848" stroke-width="1"/>
<line x1="382.5" y1="86" x2="382.5" y2="104" stroke="#5e5e5e" stroke-width="1"/>
<text x="384.3" y="96.3" font-size="10" fill="#4e4e4e">200</text>
<line x1="386.5" y1="100.5" x2="386.5" y2="104" stroke="#484848" stroke-width="1"/>
<line x1="391.5" y1="100.5" x2="391.5" y2="104" stroke="#484848" stroke-width="1"/>
<line x1="395.5" y1="100.5" x2="395.5" y2="104" stroke="#484848" stroke-width="1"/>
<line x1="399.5" y1="100.5" x2="399.5" y2="104" stroke="#484848" stroke-width="1"/>
<line x1="404.5" y1="97.5" x2="404.5" y2="104" stroke="#484848" stroke-width="1"/>
<line x1="408.5" y1="100.5" x2="408.5" y2="104" stroke="#484848" stroke-width="1"/>
<line x1="413.5" y1="100.5" x2="413.5" y2="104" stroke="#484848" stroke-width="1"/>
<line x1="417.5" y1="100.5" x2="417.5" y2="104" stroke="#484848" stroke-width="1"/>
<line x1="422.5" y1="100.5" x2="422.5" y2="104" stroke="#484848" stroke-width="1"/>
<line x1="426.5" y1="86" x2="426.5" y2="104" stroke="#5e5e5e" stroke-width="1"/>
<text x="428.3" y="96.3" font-size="10" fill="#4e4e4e">210</text>
<line x1="431.5" y1="100.5" x2="431.5" y2="104" stroke="#484848" stroke-width="1"/>
<line x1="435.5" y1="100.5" x2="435.5" y2="104" stroke="#484848" stroke-width="1"/>
<line x1="440.5" y1="100.5" x2="440.5" y2="104" stroke="#484848" stroke-width="1"/>
<line x1="444.5" y1="100.5" x2="444.5" y2="104" stroke="#484848" stroke-width="1"/>
<line x1="448.5" y1="97.5" x2="448.5" y2="104" stroke="#484848" stroke-width="1"/>
<line x1="453.5" y1="100.5" x2="453.5" y2="104" stroke="#484848" stroke-width="1"/>
<line x1="457.5" y1="100.5" x2="457.5" y2="104" stroke="#484848" stroke-width="1"/>
<line x1="462.5" y1="100.5" x2="462.5" y2="104" stroke="#484848" stroke-width="1"/>
<line x1="466.5" y1="100.5" x2="466.5" y2="104" stroke="#484848" stroke-width="1"/>
<line x1="471.5" y1="86" x2="471.5" y2="104" stroke="#5e5e5e" stroke-width="1"/>
<text x="473.3" y="96.3" font-size="10" fill="#4e4e4e">220</text>
<line x1="475.5" y1="100.5" x2="475.5" y2="104" stroke="#484848" stroke-width="1"/>
<line x1="480.5" y1="100.5" x2="480.5" y2="104" stroke="#484848" stroke-width="1"/>
<line x1="484.5" y1="100.5" x2="484.5" y2="104" stroke="#484848" stroke-width="1"/>
<line x1="488.5" y1="100.5" x2="488.5" y2="104" stroke="#484848" stroke-width="1"/>
<line x1="493.5" y1="97.5" x2="493.5" y2="104" stroke="#484848" stroke-width="1"/>
<line x1="497.5" y1="100.5" x2="497.5" y2="104" stroke="#484848" stroke-width="1"/>
<line x1="502.5" y1="100.5" x2="502.5" y2="104" stroke="#484848" stroke-width="1"/>
<line x1="506.5" y1="100.5" x2="506.5" y2="104" stroke="#484848" stroke-width="1"/>
<line x1="511.5" y1="100.5" x2="511.5" y2="104" stroke="#484848" stroke-width="1"/>
<line x1="515.5" y1="86" x2="515.5" y2="104" stroke="#5e5e5e" stroke-width="1"/>
<text x="517.3" y="96.3" font-size="10" fill="#4e4e4e">230</text>
<line x1="520.5" y1="100.5" x2="520.5" y2="104" stroke="#484848" stroke-width="1"/>
<line x1="524.5" y1="100.5" x2="524.5" y2="104" stroke="#484848" stroke-width="1"/>
<line x1="529.5" y1="100.5" x2="529.5" y2="104" stroke="#484848" stroke-width="1"/>
<line x1="533.5" y1="100.5" x2="533.5" y2="104" stroke="#484848" stroke-width="1"/>
<line x1="537.5" y1="97.5" x2="537.5" y2="104" stroke="#484848" stroke-width="1"/>
<line x1="542.5" y1="100.5" x2="542.5" y2="104" stroke="#484848" stroke-width="1"/>
<line x1="546.5" y1="100.5" x2="546.5" y2="104" stroke="#484848" stroke-width="1"/>
<line x1="551.5" y1="100.5" x2="551.5" y2="104" stroke="#484848" stroke-width="1"/>
<line x1="555.5" y1="100.5" x2="555.5" y2="104" stroke="#484848" stroke-width="1"/>
<line x1="560.5" y1="86" x2="560.5" y2="104" stroke="#5e5e5e" stroke-width="1"/>
<text x="562.3" y="96.3" font-size="10" fill="#4e4e4e">240</text>
<line x1="564.5" y1="100.5" x2="564.5" y2="104" stroke="#484848" stroke-width="1"/>
<line x1="569.5" y1="100.5" x2="569.5" y2="104" stroke="#484848" stroke-width="1"/>
<line x1="573.5" y1="100.5" x2="573.5" y2="104" stroke="#484848" stroke-width="1"/>
<line x1="578.5" y1="100.5" x2="578.5" y2="104" stroke="#484848" stroke-width="1"/>
<line x1="582.5" y1="97.5" x2="582.5" y2="104" stroke="#484848" stroke-width="1"/>
<line x1="586.5" y1="100.5" x2="586.5" y2="104" stroke="#484848" stroke-width="1"/>
<line x1="591.5" y1="100.5" x2="591.5" y2="104" stroke="#484848" stroke-width="1"/>
<line x1="595.5" y1="100.5" x2="595.5" y2="104" stroke="#484848" stroke-width="1"/>
<line x1="600.5" y1="100.5" x2="600.5" y2="104" stroke="#484848" stroke-width="1"/>
<line x1="604.5" y1="86" x2="604.5" y2="104" stroke="#5e5e5e" stroke-width="1"/>
<text x="606.3" y="96.3" font-size="10" fill="#4e4e4e">250</text>
<line x1="609.5" y1="100.5" x2="609.5" y2="104" stroke="#484848" stroke-width="1"/>
<line x1="613.5" y1="100.5" x2="613.5" y2="104" stroke="#484848" stroke-width="1"/>
<line x1="618.5" y1="100.5" x2="618.5" y2="104" stroke="#484848" stroke-width="1"/>
<line x1="622.5" y1="100.5" x2="622.5" y2="104" stroke="#484848" stroke-width="1"/>
<line x1="627.5" y1="97.5" x2="627.5" y2="104" stroke="#484848" stroke-width="1"/>
<line x1="631.5" y1="100.5" x2="631.5" y2="104" stroke="#484848" stroke-width="1"/>
<line x1="635.5" y1="100.5" x2="635.5" y2="104" stroke="#484848" stroke-width="1"/>
<line x1="640.5" y1="100.5" x2="640.5" y2="104" stroke="#484848" stroke-width="1"/>
<line x1="644.5" y1="100.5" x2="644.5" y2="104" stroke="#484848" stroke-width="1"/>
<line x1="649.5" y1="86" x2="649.5" y2="104" stroke="#5e5e5e" stroke-width="1"/>
<text x="651.3" y="96.3" font-size="10" fill="#4e4e4e">260</text>
<line x1="653.5" y1="100.5" x2="653.5" y2="104" stroke="#484848" stroke-width="1"/>
<line x1="658.5" y1="100.5" x2="658.5" y2="104" stroke="#484848" stroke-width="1"/>
<line x1="662.5" y1="100.5" x2="662.5" y2="104" stroke="#484848" stroke-width="1"/>
<line x1="667.5" y1="100.5" x2="667.5" y2="104" stroke="#484848" stroke-width="1"/>
<line x1="671.5" y1="97.5" x2="671.5" y2="104" stroke="#484848" stroke-width="1"/>
<line x1="675.5" y1="100.5" x2="675.5" y2="104" stroke="#484848" stroke-width="1"/>
<line x1="680.5" y1="100.5" x2="680.5" y2="104" stroke="#484848" stroke-width="1"/>
<line x1="684.5" y1="100.5" x2="684.5" y2="104" stroke="#484848" stroke-width="1"/>
<line x1="689.5" y1="100.5" x2="689.5" y2="104" stroke="#484848" stroke-width="1"/>
<line x1="693.5" y1="86" x2="693.5" y2="104" stroke="#5e5e5e" stroke-width="1"/>
<text x="695.3" y="96.3" font-size="10" fill="#4e4e4e">270</text>
<line x1="698.5" y1="100.5" x2="698.5" y2="104" stroke="#484848" stroke-width="1"/>
<line x1="702.5" y1="100.5" x2="702.5" y2="104" stroke="#484848" stroke-width="1"/>
<line x1="707.5" y1="100.5" x2="707.5" y2="104" stroke="#484848" stroke-width="1"/>
<line x1="711.5" y1="100.5" x2="711.5" y2="104" stroke="#484848" stroke-width="1"/>
<line x1="716.5" y1="97.5" x2="716.5" y2="104" stroke="#484848" stroke-width="1"/>
<line x1="720.5" y1="100.5" x2="720.5" y2="104" stroke="#484848" stroke-width="1"/>
<line x1="724.5" y1="100.5" x2="724.5" y2="104" stroke="#484848" stroke-width="1"/>
<line x1="729.5" y1="100.5" x2="729.5" y2="104" stroke="#484848" stroke-width="1"/>
<line x1="733.5" y1="100.5" x2="733.5" y2="104" stroke="#484848" stroke-width="1"/>
<line x1="738.5" y1="86" x2="738.5" y2="104" stroke="#5e5e5e" stroke-width="1"/>
<text x="740.3" y="96.3" font-size="10" fill="#4e4e4e">280</text>
<line x1="742.5" y1="100.5" x2="742.5" y2="104" stroke="#484848" stroke-width="1"/>
<line x1="747.5" y1="100.5" x2="747.5" y2="104" stroke="#484848" stroke-width="1"/>
<line x1="751.5" y1="100.5" x2="751.5" y2="104" stroke="#484848" stroke-width="1"/>
<line x1="756.5" y1="100.5" x2="756.5" y2="104" stroke="#484848" stroke-width="1"/>
<line x1="760.5" y1="97.5" x2="760.5" y2="104" stroke="#484848" stroke-width="1"/>
<line x1="765.5" y1="100.5" x2="765.5" y2="104" stroke="#484848" stroke-width="1"/>
<line x1="769.5" y1="100.5" x2="769.5" y2="104" stroke="#484848" stroke-width="1"/>
<line x1="773.5" y1="100.5" x2="773.5" y2="104" stroke="#484848" stroke-width="1"/>
<line x1="778.5" y1="100.5" x2="778.5" y2="104" stroke="#484848" stroke-width="1"/>
<line x1="782.5" y1="86" x2="782.5" y2="104" stroke="#5e5e5e" stroke-width="1"/>
<text x="784.3" y="96.3" font-size="10" fill="#4e4e4e">290</text>
<line x1="787.5" y1="100.5" x2="787.5" y2="104" stroke="#484848" stroke-width="1"/>
<line x1="791.5" y1="100.5" x2="791.5" y2="104" stroke="#484848" stroke-width="1"/>
<line x1="796.5" y1="100.5" x2="796.5" y2="104" stroke="#484848" stroke-width="1"/>
<line x1="800.5" y1="100.5" x2="800.5" y2="104" stroke="#484848" stroke-width="1"/>
<clipPath id="vr"><rect x="43" y="106" width="20" height="587"/></clipPath><g clip-path="url(#vr)"><line x1="44" y1="107.5" x2="62" y2="107.5" stroke="#5e5e5e" stroke-width="1"/>
<text transform="translate(54.3,109.5) rotate(-90)" text-anchor="end" font-size="10" fill="#4e4e4e">0</text>
<line x1="58.5" y1="111.5" x2="62" y2="111.5" stroke="#484848" stroke-width="1"/>
<line x1="58.5" y1="116.5" x2="62" y2="116.5" stroke="#484848" stroke-width="1"/>
<line x1="58.5" y1="120.5" x2="62" y2="120.5" stroke="#484848" stroke-width="1"/>
<line x1="58.5" y1="125.5" x2="62" y2="125.5" stroke="#484848" stroke-width="1"/>
<line x1="55" y1="129.5" x2="62" y2="129.5" stroke="#484848" stroke-width="1"/>
<line x1="58.5" y1="134.5" x2="62" y2="134.5" stroke="#484848" stroke-width="1"/>
<line x1="58.5" y1="138.5" x2="62" y2="138.5" stroke="#484848" stroke-width="1"/>
<line x1="58.5" y1="142.5" x2="62" y2="142.5" stroke="#484848" stroke-width="1"/>
<line x1="58.5" y1="147.5" x2="62" y2="147.5" stroke="#484848" stroke-width="1"/>
<line x1="44" y1="151.5" x2="62" y2="151.5" stroke="#5e5e5e" stroke-width="1"/>
<text transform="translate(54.3,153.5) rotate(-90)" text-anchor="end" font-size="10" fill="#4e4e4e">10</text>
<line x1="58.5" y1="156.5" x2="62" y2="156.5" stroke="#484848" stroke-width="1"/>
<line x1="58.5" y1="160.5" x2="62" y2="160.5" stroke="#484848" stroke-width="1"/>
<line x1="58.5" y1="165.5" x2="62" y2="165.5" stroke="#484848" stroke-width="1"/>
<line x1="58.5" y1="169.5" x2="62" y2="169.5" stroke="#484848" stroke-width="1"/>
<line x1="55" y1="173.5" x2="62" y2="173.5" stroke="#484848" stroke-width="1"/>
<line x1="58.5" y1="178.5" x2="62" y2="178.5" stroke="#484848" stroke-width="1"/>
<line x1="58.5" y1="182.5" x2="62" y2="182.5" stroke="#484848" stroke-width="1"/>
<line x1="58.5" y1="187.5" x2="62" y2="187.5" stroke="#484848" stroke-width="1"/>
<line x1="58.5" y1="191.5" x2="62" y2="191.5" stroke="#484848" stroke-width="1"/>
<line x1="44" y1="196.5" x2="62" y2="196.5" stroke="#5e5e5e" stroke-width="1"/>
<text transform="translate(54.3,198.5) rotate(-90)" text-anchor="end" font-size="10" fill="#4e4e4e">20</text>
<line x1="58.5" y1="200.5" x2="62" y2="200.5" stroke="#484848" stroke-width="1"/>
<line x1="58.5" y1="204.5" x2="62" y2="204.5" stroke="#484848" stroke-width="1"/>
<line x1="58.5" y1="209.5" x2="62" y2="209.5" stroke="#484848" stroke-width="1"/>
<line x1="58.5" y1="213.5" x2="62" y2="213.5" stroke="#484848" stroke-width="1"/>
<line x1="55" y1="218.5" x2="62" y2="218.5" stroke="#484848" stroke-width="1"/>
<line x1="58.5" y1="222.5" x2="62" y2="222.5" stroke="#484848" stroke-width="1"/>
<line x1="58.5" y1="227.5" x2="62" y2="227.5" stroke="#484848" stroke-width="1"/>
<line x1="58.5" y1="231.5" x2="62" y2="231.5" stroke="#484848" stroke-width="1"/>
<line x1="58.5" y1="235.5" x2="62" y2="235.5" stroke="#484848" stroke-width="1"/>
<line x1="44" y1="240.5" x2="62" y2="240.5" stroke="#5e5e5e" stroke-width="1"/>
<text transform="translate(54.3,242.5) rotate(-90)" text-anchor="end" font-size="10" fill="#4e4e4e">30</text>
<line x1="58.5" y1="244.5" x2="62" y2="244.5" stroke="#484848" stroke-width="1"/>
<line x1="58.5" y1="249.5" x2="62" y2="249.5" stroke="#484848" stroke-width="1"/>
<line x1="58.5" y1="253.5" x2="62" y2="253.5" stroke="#484848" stroke-width="1"/>
<line x1="58.5" y1="258.5" x2="62" y2="258.5" stroke="#484848" stroke-width="1"/>
<line x1="55" y1="262.5" x2="62" y2="262.5" stroke="#484848" stroke-width="1"/>
<line x1="58.5" y1="266.5" x2="62" y2="266.5" stroke="#484848" stroke-width="1"/>
<line x1="58.5" y1="271.5" x2="62" y2="271.5" stroke="#484848" stroke-width="1"/>
<line x1="58.5" y1="275.5" x2="62" y2="275.5" stroke="#484848" stroke-width="1"/>
<line x1="58.5" y1="280.5" x2="62" y2="280.5" stroke="#484848" stroke-width="1"/>
<line x1="44" y1="284.5" x2="62" y2="284.5" stroke="#5e5e5e" stroke-width="1"/>
<text transform="translate(54.3,286.5) rotate(-90)" text-anchor="end" font-size="10" fill="#4e4e4e">40</text>
<line x1="58.5" y1="289.5" x2="62" y2="289.5" stroke="#484848" stroke-width="1"/>
<line x1="58.5" y1="293.5" x2="62" y2="293.5" stroke="#484848" stroke-width="1"/>
<line x1="58.5" y1="297.5" x2="62" y2="297.5" stroke="#484848" stroke-width="1"/>
<line x1="58.5" y1="302.5" x2="62" y2="302.5" stroke="#484848" stroke-width="1"/>
<line x1="55" y1="306.5" x2="62" y2="306.5" stroke="#484848" stroke-width="1"/>
<line x1="58.5" y1="311.5" x2="62" y2="311.5" stroke="#484848" stroke-width="1"/>
<line x1="58.5" y1="315.5" x2="62" y2="315.5" stroke="#484848" stroke-width="1"/>
<line x1="58.5" y1="320.5" x2="62" y2="320.5" stroke="#484848" stroke-width="1"/>
<line x1="58.5" y1="324.5" x2="62" y2="324.5" stroke="#484848" stroke-width="1"/>
<line x1="44" y1="329.5" x2="62" y2="329.5" stroke="#5e5e5e" stroke-width="1"/>
<text transform="translate(54.3,331.5) rotate(-90)" text-anchor="end" font-size="10" fill="#4e4e4e">50</text>
<line x1="58.5" y1="333.5" x2="62" y2="333.5" stroke="#484848" stroke-width="1"/>
<line x1="58.5" y1="337.5" x2="62" y2="337.5" stroke="#484848" stroke-width="1"/>
<line x1="58.5" y1="342.5" x2="62" y2="342.5" stroke="#484848" stroke-width="1"/>
<line x1="58.5" y1="346.5" x2="62" y2="346.5" stroke="#484848" stroke-width="1"/>
<line x1="55" y1="351.5" x2="62" y2="351.5" stroke="#484848" stroke-width="1"/>
<line x1="58.5" y1="355.5" x2="62" y2="355.5" stroke="#484848" stroke-width="1"/>
<line x1="58.5" y1="360.5" x2="62" y2="360.5" stroke="#484848" stroke-width="1"/>
<line x1="58.5" y1="364.5" x2="62" y2="364.5" stroke="#484848" stroke-width="1"/>
<line x1="58.5" y1="368.5" x2="62" y2="368.5" stroke="#484848" stroke-width="1"/>
<line x1="44" y1="373.5" x2="62" y2="373.5" stroke="#5e5e5e" stroke-width="1"/>
<text transform="translate(54.3,375.5) rotate(-90)" text-anchor="end" font-size="10" fill="#4e4e4e">60</text>
<line x1="58.5" y1="377.5" x2="62" y2="377.5" stroke="#484848" stroke-width="1"/>
<line x1="58.5" y1="382.5" x2="62" y2="382.5" stroke="#484848" stroke-width="1"/>
<line x1="58.5" y1="386.5" x2="62" y2="386.5" stroke="#484848" stroke-width="1"/>
<line x1="58.5" y1="391.5" x2="62" y2="391.5" stroke="#484848" stroke-width="1"/>
<line x1="55" y1="395.5" x2="62" y2="395.5" stroke="#484848" stroke-width="1"/>
<line x1="58.5" y1="399.5" x2="62" y2="399.5" stroke="#484848" stroke-width="1"/>
<line x1="58.5" y1="404.5" x2="62" y2="404.5" stroke="#484848" stroke-width="1"/>
<line x1="58.5" y1="408.5" x2="62" y2="408.5" stroke="#484848" stroke-width="1"/>
<line x1="58.5" y1="413.5" x2="62" y2="413.5" stroke="#484848" stroke-width="1"/>
<line x1="44" y1="417.5" x2="62" y2="417.5" stroke="#5e5e5e" stroke-width="1"/>
<text transform="translate(54.3,419.5) rotate(-90)" text-anchor="end" font-size="10" fill="#4e4e4e">70</text>
<line x1="58.5" y1="422.5" x2="62" y2="422.5" stroke="#484848" stroke-width="1"/>
<line x1="58.5" y1="426.5" x2="62" y2="426.5" stroke="#484848" stroke-width="1"/>
<line x1="58.5" y1="430.5" x2="62" y2="430.5" stroke="#484848" stroke-width="1"/>
<line x1="58.5" y1="435.5" x2="62" y2="435.5" stroke="#484848" stroke-width="1"/>
<line x1="55" y1="439.5" x2="62" y2="439.5" stroke="#484848" stroke-width="1"/>
<line x1="58.5" y1="444.5" x2="62" y2="444.5" stroke="#484848" stroke-width="1"/>
<line x1="58.5" y1="448.5" x2="62" y2="448.5" stroke="#484848" stroke-width="1"/>
<line x1="58.5" y1="453.5" x2="62" y2="453.5" stroke="#484848" stroke-width="1"/>
<line x1="58.5" y1="457.5" x2="62" y2="457.5" stroke="#484848" stroke-width="1"/>
<line x1="44" y1="461.5" x2="62" y2="461.5" stroke="#5e5e5e" stroke-width="1"/>
<text transform="translate(54.3,463.5) rotate(-90)" text-anchor="end" font-size="10" fill="#4e4e4e">80</text>
<line x1="58.5" y1="466.5" x2="62" y2="466.5" stroke="#484848" stroke-width="1"/>
<line x1="58.5" y1="470.5" x2="62" y2="470.5" stroke="#484848" stroke-width="1"/>
<line x1="58.5" y1="475.5" x2="62" y2="475.5" stroke="#484848" stroke-width="1"/>
<line x1="58.5" y1="479.5" x2="62" y2="479.5" stroke="#484848" stroke-width="1"/>
<line x1="55" y1="484.5" x2="62" y2="484.5" stroke="#484848" stroke-width="1"/>
<line x1="58.5" y1="488.5" x2="62" y2="488.5" stroke="#484848" stroke-width="1"/>
<line x1="58.5" y1="492.5" x2="62" y2="492.5" stroke="#484848" stroke-width="1"/>
<line x1="58.5" y1="497.5" x2="62" y2="497.5" stroke="#484848" stroke-width="1"/>
<line x1="58.5" y1="501.5" x2="62" y2="501.5" stroke="#484848" stroke-width="1"/>
<line x1="44" y1="506.5" x2="62" y2="506.5" stroke="#5e5e5e" stroke-width="1"/>
<text transform="translate(54.3,508.5) rotate(-90)" text-anchor="end" font-size="10" fill="#4e4e4e">90</text>
<line x1="58.5" y1="510.5" x2="62" y2="510.5" stroke="#484848" stroke-width="1"/>
<line x1="58.5" y1="515.5" x2="62" y2="515.5" stroke="#484848" stroke-width="1"/>
<line x1="58.5" y1="519.5" x2="62" y2="519.5" stroke="#484848" stroke-width="1"/>
<line x1="58.5" y1="523.5" x2="62" y2="523.5" stroke="#484848" stroke-width="1"/>
<line x1="55" y1="528.5" x2="62" y2="528.5" stroke="#484848" stroke-width="1"/>
<line x1="58.5" y1="532.5" x2="62" y2="532.5" stroke="#484848" stroke-width="1"/>
<line x1="58.5" y1="537.5" x2="62" y2="537.5" stroke="#484848" stroke-width="1"/>
<line x1="58.5" y1="541.5" x2="62" y2="541.5" stroke="#484848" stroke-width="1"/>
<line x1="58.5" y1="546.5" x2="62" y2="546.5" stroke="#484848" stroke-width="1"/>
<line x1="44" y1="550.5" x2="62" y2="550.5" stroke="#5e5e5e" stroke-width="1"/>
<text transform="translate(54.3,552.5) rotate(-90)" text-anchor="end" font-size="10" fill="#4e4e4e">100</text>
<line x1="58.5" y1="554.5" x2="62" y2="554.5" stroke="#484848" stroke-width="1"/>
<line x1="58.5" y1="559.5" x2="62" y2="559.5" stroke="#484848" stroke-width="1"/>
<line x1="58.5" y1="563.5" x2="62" y2="563.5" stroke="#484848" stroke-width="1"/>
<line x1="58.5" y1="568.5" x2="62" y2="568.5" stroke="#484848" stroke-width="1"/>
<line x1="55" y1="572.5" x2="62" y2="572.5" stroke="#484848" stroke-width="1"/>
<line x1="58.5" y1="577.5" x2="62" y2="577.5" stroke="#484848" stroke-width="1"/>
<line x1="58.5" y1="581.5" x2="62" y2="581.5" stroke="#484848" stroke-width="1"/>
<line x1="58.5" y1="585.5" x2="62" y2="585.5" stroke="#484848" stroke-width="1"/>
<line x1="58.5" y1="590.5" x2="62" y2="590.5" stroke="#484848" stroke-width="1"/>
<line x1="44" y1="594.5" x2="62" y2="594.5" stroke="#5e5e5e" stroke-width="1"/>
<text transform="translate(54.3,596.5) rotate(-90)" text-anchor="end" font-size="10" fill="#4e4e4e">110</text>
<line x1="58.5" y1="599.5" x2="62" y2="599.5" stroke="#484848" stroke-width="1"/>
<line x1="58.5" y1="603.5" x2="62" y2="603.5" stroke="#484848" stroke-width="1"/>
<line x1="58.5" y1="608.5" x2="62" y2="608.5" stroke="#484848" stroke-width="1"/>
<line x1="58.5" y1="612.5" x2="62" y2="612.5" stroke="#484848" stroke-width="1"/>
<line x1="55" y1="616.5" x2="62" y2="616.5" stroke="#484848" stroke-width="1"/>
<line x1="58.5" y1="621.5" x2="62" y2="621.5" stroke="#484848" stroke-width="1"/>
<line x1="58.5" y1="625.5" x2="62" y2="625.5" stroke="#484848" stroke-width="1"/>
<line x1="58.5" y1="630.5" x2="62" y2="630.5" stroke="#484848" stroke-width="1"/>
<line x1="58.5" y1="634.5" x2="62" y2="634.5" stroke="#484848" stroke-width="1"/>
<line x1="44" y1="639.5" x2="62" y2="639.5" stroke="#5e5e5e" stroke-width="1"/>
<text transform="translate(54.3,641.5) rotate(-90)" text-anchor="end" font-size="10" fill="#4e4e4e">120</text>
<line x1="58.5" y1="643.5" x2="62" y2="643.5" stroke="#484848" stroke-width="1"/>
<line x1="58.5" y1="647.5" x2="62" y2="647.5" stroke="#484848" stroke-width="1"/>
<line x1="58.5" y1="652.5" x2="62" y2="652.5" stroke="#484848" stroke-width="1"/>
<line x1="58.5" y1="656.5" x2="62" y2="656.5" stroke="#484848" stroke-width="1"/>
<line x1="55" y1="661.5" x2="62" y2="661.5" stroke="#484848" stroke-width="1"/>
<line x1="58.5" y1="665.5" x2="62" y2="665.5" stroke="#484848" stroke-width="1"/>
<line x1="58.5" y1="670.5" x2="62" y2="670.5" stroke="#484848" stroke-width="1"/>
<line x1="58.5" y1="674.5" x2="62" y2="674.5" stroke="#484848" stroke-width="1"/>
<line x1="58.5" y1="678.5" x2="62" y2="678.5" stroke="#484848" stroke-width="1"/>
<line x1="44" y1="683.5" x2="62" y2="683.5" stroke="#5e5e5e" stroke-width="1"/>
<text transform="translate(54.3,685.5) rotate(-90)" text-anchor="end" font-size="10" fill="#4e4e4e">130</text>
<line x1="58.5" y1="687.5" x2="62" y2="687.5" stroke="#484848" stroke-width="1"/>
<line x1="58.5" y1="692.5" x2="62" y2="692.5" stroke="#484848" stroke-width="1"/></g>
</svg>
<div class="a" style="left:802px;top:85px;width:398px;height:610px;background:#dfdfdf;border-left:1px solid #f2f2f2"></div>
<div class="a" style="left:803px;top:388px;width:3px;height:7px;border-top:1px solid #aaa;border-bottom:1px solid #aaa"></div>
<div class="a" style="left:808px;top:88.5px;width:95px;height:25px;background:#f7f7f7;border:1px solid #bdbdbd;border-radius:2px 2px 0 0"></div>
<div class="a" style="left:1012px;top:88.5px;width:122px;height:25px;background:#f7f7f7;border:1px solid #bdbdbd;border-radius:2px 2px 0 0"></div>
<div class="a" style="left:902px;top:85.5px;width:111px;height:29px;background:#fdfdfd;border:1px solid #bdbdbd;border-bottom:none;border-radius:2px 2px 0 0"></div>
<div class="t" style="left:815.5px;top:92px;color:#444">Composition</div>
<div class="t" style="left:909px;top:91px;color:#444">Item properties</div>
<div class="t" style="left:1022px;top:92px;color:#444">Atlas generation</div>
<div class="a" style="left:1133px;top:112px;width:67px;height:1px;background:#c8c8c8"></div>
<div class="t" style="left:810px;top:118px;color:#555;font-size:14.5px">Item properties</div>
<div class="a" style="left:1188px;top:121px;width:10px;height:10px;border:1px solid #666;border-radius:2px"></div>
<svg class="a" style="left:1188px;top:121px" width="10" height="10"><path d="M2.5,2.5L7.5,7.5M7.5,2.5L2.5,7.5" stroke="#444" stroke-width="1.7"/></svg>
<div class="a" style="left:808px;top:137px;width:392px;height:20px;background:#c9c9c9"></div>
<div class="t" style="left:814px;top:139px;font-weight:bold;font-size:13.5px;color:#3f3f3f">Scalebar</div>
<div class="a" style="left:808px;top:156.5px;width:392px;height:538px;border-left:1px solid #a9a9a9;border-top:1px solid #b9b9b9;border-bottom:1px solid #9c9c9c"></div>
<div class="a" style="left:1186px;top:157.5px;width:13px;height:536px;background:#e2e2e2;border-left:1px solid #d4d4d4"></div>
<div class="a" style="left:1189px;top:161px;width:7px;height:7px;border-radius:3.5px 3.5px 0 0;background:#a8a8a8"></div>
<div class="a" style="left:1189px;top:272px;width:7px;height:332px;border-radius:3.5px;background:#a4a4a4"></div>
<div class="a" style="left:1189px;top:684px;width:7px;height:7px;border-radius:0 0 3.5px 3.5px;background:#a8a8a8"></div>
<div class="t lb" style="left:837px;top:160px">Label</div>
<div class="inp" style="left:982.5px;top:157.5px;width:181px;height:21px">km</div>
<div class="t lb" style="left:837px;top:191px">Map units per bar unit</div>
<div class="inp" style="left:982.5px;top:186px;width:168px;border-radius:3px 0 0 3px">1000,000000</div>
<div class="spin" style="left:1150.5px;top:186px"></div>
<svg class="a" style="left:1150.5px;top:186px" width="13" height="23"><path d="M4.2,8.5H8.8L6.5,4.8Z" fill="#6a6a6a"/><path d="M4.2,14.5H8.8L6.5,18.2Z" fill="#6a6a6a"/></svg>
<svg class="a" style="left:821px;top:233px" width="12" height="9"><path d="M0.5,1H11L5.75,8Z" fill="#333"/></svg>
<div class="t" style="left:839.5px;top:230px;color:#333">Segments</div>
<div class="t lb" style="left:837px;top:259px">Segments</div>
<div class="inp" style="left:906.5px;top:255px;width:111.5px;border-radius:3px 0 0 3px">left 2</div>
<div class="spin" style="left:1018.0px;top:255px"></div>
<svg class="a" style="left:1018.0px;top:255px" width="13" height="23"><path d="M4.2,8.5H8.8L6.5,4.8Z" fill="#6a6a6a"/><path d="M4.2,14.5H8.8L6.5,18.2Z" fill="#6a6a6a"/></svg>
<div class="inp" style="left:1040px;top:255px;width:110.5px;border-radius:3px 0 0 3px">right 4</div>
<div class="spin" style="left:1150.5px;top:255px"></div>
<svg class="a" style="left:1150.5px;top:255px" width="13" height="23"><path d="M4.2,8.5H8.8L6.5,4.8Z" fill="#6a6a6a"/><path d="M4.2,14.5H8.8L6.5,18.2Z" fill="#6a6a6a"/></svg>
<div class="t lb" style="left:837px;top:290px">Size</div>
<div class="inp" style="left:906.5px;top:286px;width:244px;border-radius:3px 0 0 3px">5000,000000 units</div>
<div class="spin" style="left:1150.5px;top:286px"></div>
<svg class="a" style="left:1150.5px;top:286px" width="13" height="23"><path d="M4.2,8.5H8.8L6.5,4.8Z" fill="#6a6a6a"/><path d="M4.2,14.5H8.8L6.5,18.2Z" fill="#6a6a6a"/></svg>
<div class="t lb" style="left:837px;top:321px">Height</div>
<div class="inp" style="left:906.5px;top:317px;width:244px;border-radius:3px 0 0 3px">3 mm</div>
<div class="spin" style="left:1150.5px;top:317px"></div>
<svg class="a" style="left:1150.5px;top:317px" width="13" height="23"><path d="M4.2,8.5H8.8L6.5,4.8Z" fill="#6a6a6a"/><path d="M4.2,14.5H8.8L6.5,18.2Z" fill="#6a6a6a"/></svg>
<svg class="a" style="left:821px;top:363px" width="12" height="9"><path d="M0.5,1H11L5.75,8Z" fill="#333"/></svg>
<div class="t" style="left:839.5px;top:360px;color:#333">Display</div>
<div class="t lb" style="left:837px;top:389px">Box margin</div>
<div class="inp" style="left:932.5px;top:385px;width:218px;border-radius:3px 0 0 3px">1,00 mm</div>
<div class="spin" style="left:1150.5px;top:385px"></div>
<svg class="a" style="left:1150.5px;top:385px" width="13" height="23"><path d="M4.2,8.5H8.8L6.5,4.8Z" fill="#6a6a6a"/><path d="M4.2,14.5H8.8L6.5,18.2Z" fill="#6a6a6a"/></svg>
<div class="t lb" style="left:837px;top:420px">Labels margin</div>
<div class="inp" style="left:932.5px;top:416px;width:218px;border-radius:3px 0 0 3px">3,00 mm</div>
<div class="spin" style="left:1150.5px;top:416px"></div>
<svg class="a" style="left:1150.5px;top:416px" width="13" height="23"><path d="M4.2,8.5H8.8L6.5,4.8Z" fill="#6a6a6a"/><path d="M4.2,14.5H8.8L6.5,18.2Z" fill="#6a6a6a"/></svg>
<div class="t lb" style="left:837px;top:451px">Line width</div>
<div class="inp" style="left:932.5px;top:447px;width:218px;border-radius:3px 0 0 3px">1,00 mm</div>
<div class="spin" style="left:1150.5px;top:447px"></div>
<svg class="a" style="left:1150.5px;top:447px" width="13" height="23"><path d="M4.2,8.5H8.8L6.5,4.8Z" fill="#6a6a6a"/><path d="M4.2,14.5H8.8L6.5,18.2Z" fill="#6a6a6a"/></svg>
<div class="t lb" style="left:837px;top:482px">Join style</div>
<div class="cmb" style="left:932.5px;top:478px;width:231px;background:linear-gradient(#ececec,#e2e2e2);border-color:#c2c2c2;color:#a3a3a3"><span style="display:inline-block;width:17px"></span>Round</div>
<svg class="a" style="left:1149px;top:478px" width="13" height="23"><path d="M3.5,9.5H9.5L6.5,4.5Z" fill="#b0b0b0"/><path d="M3.5,13.5H9.5L6.5,18.5Z" fill="#b0b0b0"/></svg>
<svg class="a" style="left:936px;top:484px" width="17" height="14"><path d="M1,8.5 L8.5,1.5 L16,8.5 V12.5 L8.5,5.5 L1,12.5Z" fill="#b4b4b4" stroke="#a0a0a0" stroke-width="0.8"/></svg>
<div class="t lb" style="left:837px;top:513px">Cap style</div>
<div class="cmb" style="left:932.5px;top:509px;width:231px;color:#333"><span style="display:inline-block;width:17px"></span>Round</div>
<svg class="a" style="left:1149px;top:509px" width="13" height="23"><path d="M3.5,9.5H9.5L6.5,4.5Z" fill="#555"/><path d="M3.5,13.5H9.5L6.5,18.5Z" fill="#555"/></svg>
<svg class="a" style="left:937px;top:515px" width="16" height="12"><path d="M0.5,0.5 H9 A4.5,4.5 0 0 1 9,9.5 H0.5Z" fill="#5a7ea6" stroke="#2a4058"/></svg>
<div class="t lb" style="left:837px;top:544px">Alignment</div>
<div class="cmb" style="left:932.5px;top:540px;width:231px;color:#333">Left</div>
<svg class="a" style="left:1149px;top:540px" width="13" height="23"><path d="M3.5,9.5H9.5L6.5,4.5Z" fill="#555"/><path d="M3.5,13.5H9.5L6.5,18.5Z" fill="#555"/></svg>
<svg class="a" style="left:822px;top:586px" width="9" height="12"><path d="M1,0.5V11L8.5,5.75Z" fill="#333"/></svg>
<div class="t" style="left:839.5px;top:583px;color:#333">Fonts and colors</div>
<svg class="a" style="left:822px;top:613px" width="9" height="12"><path d="M1,0.5V11L8.5,5.75Z" fill="#333"/></svg>
<div class="t" style="left:839.5px;top:610px;color:#333">Position and size</div>
<svg class="a" style="left:822px;top:640px" width="9" height="12"><path d="M1,0.5V11L8.5,5.75Z" fill="#333"/></svg>
<div class="t" style="left:839.5px;top:637px;color:#333">Rotation</div>
<svg class="a" style="left:822px;top:668px" width="9" height="12"><path d="M1,0.5V11L8.5,5.75Z" fill="#333"/></svg>
<div class="t" style="left:839.5px;top:665px;color:#333"></div>
<div class="t" style="left:863px;top:665px;color:#333">Frame</div>
<div class="a" style="left:840.5px;top:667.5px;width:12px;height:12px;background:#fafafa;border:1px solid #a9a9a9;border-radius:2px"></div>
<div class="a" style="left:0;top:695px;width:1200px;height:25px;background:#dfdfdf;border-top:1px solid #eeeeee"></div>
<div class="t" style="left:2px;top:702px;color:#444;font-size:13.6px">x: 142.994 mm</div>
<div class="t" style="left:101px;top:702px;color:#444;font-size:13.6px">y: 41.9702 mm</div>
<div class="t" style="left:201px;top:702px;color:#444;font-size:13.6px">page: 1</div>
<div class="a" style="left:302px;top:698.5px;width:91px;height:26px;background:#fbfbfb;border:1px solid #aaa;border-radius:3px"></div>
<div class="a" style="left:371px;top:699.5px;width:21px;height:24px;background:linear-gradient(#f3f3f3,#e3e3e3);border-left:1px solid #c0c0c0"></div>
<svg class="a" style="left:376px;top:705px" width="11" height="10"><path d="M1,1.5H10L5.5,9Z" fill="#6a6a6a"/></svg>
<div class="t" style="left:308px;top:702px;color:#333">125.5%</div>
<div class="t" style="left:400.5px;top:702px;color:#444">1 item selected</div>
<div class="t" style="left:734px;top:702px;color:#444">Atlas feature 1 of 1</div>
</body></html>
